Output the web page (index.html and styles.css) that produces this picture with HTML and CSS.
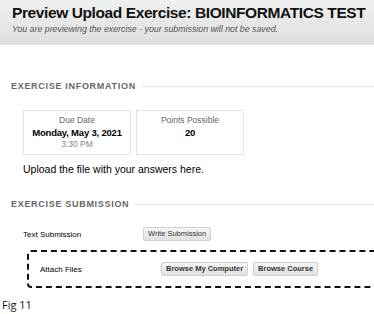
FILE: index.html
```html
<!DOCTYPE html>
<html lang="en">
<head>
  <meta charset="UTF-8">
  <title>Preview Upload Exercise</title>
  <link rel="stylesheet" href="styles.css">
</head>
<body>

  <header class="page-header">
    <h1>Preview Upload Exercise: BIOINFORMATICS TEST</h1>
    <p class="subtitle">You are previewing the exercise - your submission will not be saved.</p>
  </header>

  <section class="block">
    <h2 class="section-title"><span>EXERCISE INFORMATION</span></h2>

    <div class="info-cards">
      <div class="card">
        <div class="card-label">Due Date</div>
        <div class="card-value">Monday, May 3, 2021</div>
        <div class="card-sub">3:30 PM</div>
      </div>
      <div class="card">
        <div class="card-label">Points Possible</div>
        <div class="card-value">20</div>
      </div>
    </div>

    <p class="instructions">Upload the file with your answers here.</p>
  </section>

  <section class="block">
    <h2 class="section-title"><span>EXERCISE SUBMISSION</span></h2>

    <div class="field-row">
      <span class="field-label">Text Submission</span>
      <button class="btn">Write Submission</button>
    </div>

    <div class="attach-box">
      <span class="field-label">Attach Files</span>
      <div class="attach-buttons">
        <button class="btn btn-bold">Browse My Computer</button>
        <button class="btn btn-bold">Browse Course</button>
      </div>
    </div>
  </section>

  <footer class="caption">Fig 11</footer>

</body>
</html>
```

FILE: styles.css
```css
body {
  margin: 0;
  width: 374px;
  height: 314px;
  overflow: hidden;
  font-family: "Liberation Sans", Arial, sans-serif;
  background: #fff;
  color: #000;
}

.page-header {
  background: linear-gradient(180deg, #f0f0f0 0%, #dedede 100%);
  padding: 3px 0 0 12px;
  height: 42px;
}

.page-header h1 {
  margin: 0;
  font-size: 15.5px;
  font-weight: bold;
  letter-spacing: -0.4px;
  color: #111;
  line-height: 20px;
  white-space: nowrap;
}

.subtitle {
  margin: 1px 0 0;
  font-size: 8.8px;
  font-style: italic;
  color: #555;
}

.block {
  padding: 0 0 0 11px;
}

.section-title {
  display: flex;
  align-items: center;
  margin: 0;
  font-size: 9px;
  font-weight: bold;
  letter-spacing: 0.7px;
  color: #666;
  line-height: 12px;
}

.section-title::after {
  content: "";
  flex: 1;
  height: 1px;
  background: #e4e4e4;
  margin-left: 6px;
}

.block:first-of-type .section-title {
  margin-top: 35px;
}

.info-cards {
  display: flex;
  gap: 5px;
  margin: 18px 0 0 12px;
}

.card {
  width: 108px;
  height: 45px;
  border: 1px solid #e2e2e2;
  text-align: center;
  padding-top: 4px;
  box-sizing: border-box;
}

.card-label {
  font-size: 8.5px;
  color: #666;
  line-height: 11px;
}

.card-value {
  font-size: 9.5px;
  font-weight: bold;
  letter-spacing: -0.2px;
  line-height: 13px;
  white-space: nowrap;
}

.card-sub {
  font-size: 8.5px;
  color: #888;
  line-height: 11px;
}

.instructions {
  margin: 8px 0 0 12px;
  font-size: 10.5px;
  line-height: 13px;
}

.block + .block .section-title {
  margin-top: 22px;
}

.field-row {
  display: flex;
  align-items: center;
  margin: 17px 0 0 12px;
}

.field-label {
  font-size: 8px;
  width: 120px;
}

.btn {
  font-family: "Liberation Sans", Arial, sans-serif;
  font-size: 7.5px;
  color: #333;
  background: linear-gradient(180deg, #f6f6f6 0%, #e2e2e2 100%);
  border: 1px solid #cfcfcf;
  border-radius: 2px;
  padding: 1px 4px;
  line-height: 10px;
  margin: 0;
}

.btn-bold {
  font-weight: bold;
}

.attach-box {
  display: flex;
  align-items: center;
  margin: 9px -40px 0 16px;
  height: 38px;
  border: 2px dashed #111;
  border-radius: 4px;
  padding-left: 11px;
  box-sizing: border-box;
}

.attach-box .field-label {
  width: 121px;
}

.attach-buttons {
  display: flex;
  gap: 5px;
}

.caption {
  font-family: "Open Sans", "DejaVu Sans", sans-serif;
  font-size: 11px;
  margin: 9px 0 0 2px;
  color: #111;
}
```
